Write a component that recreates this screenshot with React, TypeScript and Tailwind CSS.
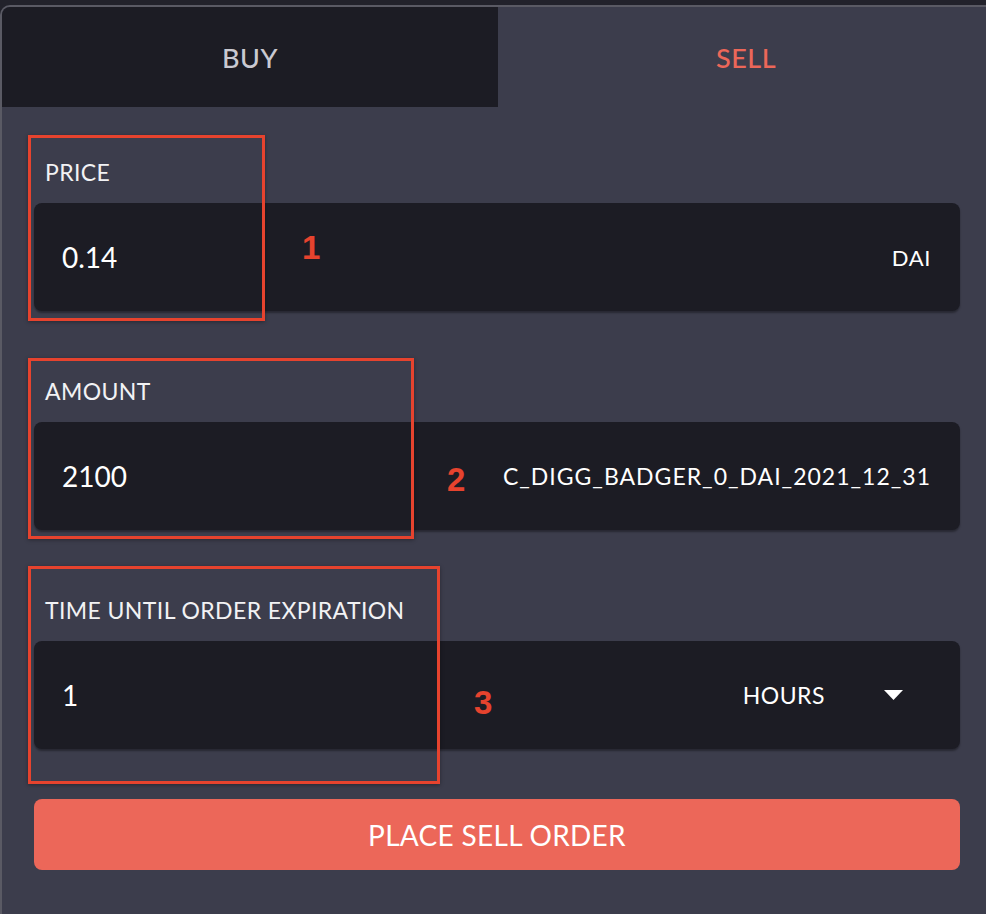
import React from "react";

type FieldProps = {
  label: string;
  value: string;
  children: React.ReactNode;
  className?: string;
};

const Field = ({ label, value, children, className }: FieldProps) => (
  <div className={className}>
    <div className="h-[28px] pl-[11px] text-[23px] leading-[28px] tracking-[0.4px] text-[#f2f2f4]">
      {label}
    </div>
    <div className="mt-[17px] flex h-[108px] items-center rounded-[8px] bg-[#1c1c24] pl-[28px] shadow-[0_2px_2px_rgba(0,0,0,0.35)]">
      <span className="flex-1 text-[28px] text-white">{value}</span>
      {children}
    </div>
  </div>
);

type MarkProps = {
  box: string;
  num: string;
  label: string;
};

// red review markers drawn over the form
const Annotation = ({ box, num, label }: MarkProps) => (
  <>
    <div
      className={`pointer-events-none absolute border-[3px] border-[#e6432e] shadow-[0_1px_4px_rgba(0,0,0,0.35)] ${box}`}
    />
    <div
      className={`pointer-events-none absolute font-['Liberation_Sans',Arial,sans-serif] text-[33px] font-bold leading-none text-[#e6432e] ${num}`}
    >
      {label}
    </div>
  </>
);

export default function App() {
  return (
    <div
      className="relative h-[914px] w-[986px] overflow-hidden bg-[#22222b] pt-[5px]"
      style={{ fontFamily: "Lato, 'Noto Sans', sans-serif" }}
    >
      <div className="h-[920px] w-[1000px] overflow-hidden rounded-tl-[10px] border-l-2 border-t-2 border-[#5a5a64] bg-[#3c3d4c]">
        <div className="flex h-[100px]">
          <button className="flex w-[496px] items-center justify-center bg-[#1c1c24] pt-[3px] text-[27px] font-medium tracking-[0.5px] text-[#c9c9d1]">
            BUY
          </button>
          <button className="flex flex-1 items-center justify-start pt-[3px] text-[27px] font-medium tracking-[0.5px] text-[#ec6759]">
            <span className="w-[496px] text-center">SELL</span>
          </button>
        </div>

        <div className="w-[958px] pl-[32px] pt-[51px]">
          <Field label="PRICE" value="0.14">
            <span className="pr-[29px] text-[22px] tracking-[0.6px] text-white">DAI</span>
          </Field>
          <Field label="AMOUNT" value="2100" className="mt-[66px]">
            <span className="pr-[29px] text-[23px] tracking-[1px] text-white">
              C_DIGG_BADGER_0_DAI_2021_12_31
            </span>
          </Field>
          <Field
            label="TIME UNTIL ORDER EXPIRATION"
            value="1"
            className="mt-[66px]"
          >
            <span className="text-[23px] tracking-[0.5px] text-white">HOURS</span>
            <svg
              width="19"
              height="10"
              viewBox="0 0 19 10"
              className="ml-[59px] mr-[57px]"
            >
              <path d="M0 0 H19 L9.5 10 Z" fill="#ffffff" />
            </svg>
          </Field>

          <button className="mt-[50px] flex h-[71px] w-full items-center justify-center rounded-[8px] bg-[#ec6759] text-[28px] tracking-[0.3px] text-white">
            PLACE SELL ORDER
          </button>
        </div>
      </div>

      <Annotation box="left-[28px] top-[135px] h-[186px] w-[237px]" num="left-[302px] top-[231px]" label="1" />
      <Annotation box="left-[28px] top-[358px] h-[181px] w-[386px]" num="left-[447px] top-[463px]" label="2" />
      <Annotation box="left-[28px] top-[566px] h-[218px] w-[412px]" num="left-[474px] top-[686px]" label="3" />
    </div>
  );
}
